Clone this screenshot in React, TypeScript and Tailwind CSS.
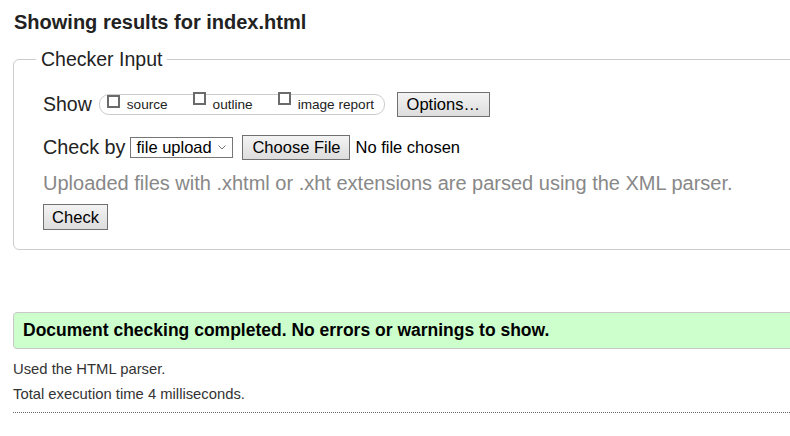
import React from "react";

const Box = () => (
  <span className="inline-block w-[13px] h-[13px] border-2 border-[#6b6b6b] bg-white -translate-y-[3px]" />
);

const btn =
  "h-[25px] px-[8px] whitespace-nowrap border border-[#707070] bg-gradient-to-b from-[#f3f3f3] to-[#dddddd] text-[16.5px] leading-[20px] text-black";

export default function App() {
  return (
    <div
      className="w-[790px] h-[436px] overflow-hidden bg-white text-[#222]"
      style={{ fontFamily: '"Liberation Sans", Arial, sans-serif' }}
    >
      <div className="w-[840px] pl-[13px]">
        <h2 className="pt-[11px] pl-[1px] text-[20px] leading-[22px] font-bold text-[#222]">
          Showing results for index.html
        </h2>

        <fieldset className="mt-[14px] border border-[#cccccc] rounded-[6px] p-0">
          <legend className="ml-[22px] px-[5px] text-[19.5px] leading-[24px] text-[#222]">
            Checker Input
          </legend>

          <div className="pl-[29px] pb-[19px]">
            <div className="mt-[20px] h-[26px] flex items-center">
              <span className="text-[19.5px] leading-[24px]">Show</span>
              <div className="ml-[7px] h-[21px] w-[286px] border border-[#cccccc] rounded-[10px] flex items-center pl-[7px] text-[13.6px]">
                <Box />
                <span className="ml-[7px] translate-y-[1px]">source</span>
                <span className="ml-[25px]"><Box /></span>
                <span className="ml-[7px] translate-y-[1px]">outline</span>
                <span className="ml-[25px]"><Box /></span>
                <span className="ml-[7px] translate-y-[1px]">image report</span>
              </div>
              <button className={`${btn} ml-[12px] w-[93px]`}>Options…</button>
            </div>

            <div className="mt-[17px] h-[26px] flex items-center">
              <span className="text-[19.8px] leading-[24px]">Check by</span>
              <div className="ml-[5px] h-[21px] w-[103px] border border-[#767676] bg-white flex items-center pl-[5px] text-[16.5px] text-black">
                <span>file upload</span>
                <svg className="ml-auto mr-[6px]" width="8" height="5" viewBox="0 0 8 5">
                  <path d="M0.5 0.5 L4 4 L7.5 0.5" fill="none" stroke="#777" strokeWidth="1" />
                </svg>
              </div>
              <button className={`${btn} ml-[9px] w-[108px]`}>Choose File</button>
              <span className="ml-[5px] text-[16.5px] text-black">No file chosen</span>
            </div>

            <p className="mt-[11px] text-[20px] leading-[24px] text-[#888888]">
              Uploaded files with .xhtml or .xht extensions are parsed using the XML parser.
            </p>

            <button className={`${btn} mt-[9px] w-[65px] h-[26px]`}>Check</button>
          </div>
        </fieldset>

        <div className="mt-[62px] h-[37px] border border-[#c8c8c8] rounded-l-[4px] bg-[#ccffcc] flex items-center pl-[9px]">
          <span className="text-[17.5px] font-bold text-black">
            Document checking completed. No errors or warnings to show.
          </span>
        </div>

        <p className="mt-[10px] text-[14.8px] leading-[20px] text-[#333]">Used the HTML parser.</p>
        <p className="mt-[5px] text-[14.8px] leading-[20px] text-[#333]">Total execution time 4 milliseconds.</p>
        <div className="mt-[8px] border-t border-dotted border-[#666]" />
      </div>
    </div>
  );
}
